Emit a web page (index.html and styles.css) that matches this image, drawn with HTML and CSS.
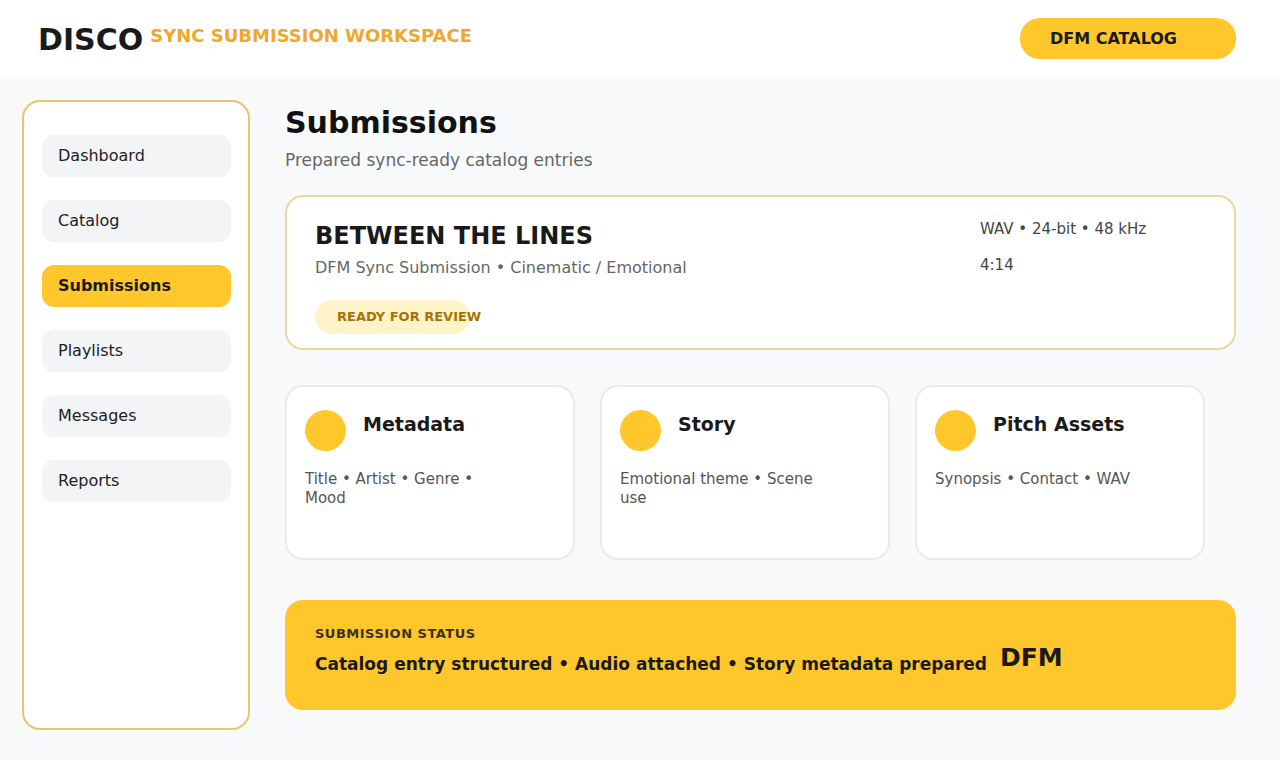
FILE: index.html
```html
<!DOCTYPE html>
<html lang="en">
<head>
<meta charset="utf-8">
<title>DISCO – Sync Submission Workspace</title>
<link rel="stylesheet" href="styles.css">
</head>
<body>
<header class="topbar">
  <div class="brand">
    <span class="brand-logo">DISCO</span>
    <span class="brand-sub">SYNC SUBMISSION WORKSPACE</span>
  </div>
  <button class="catalog-btn">DFM CATALOG</button>
</header>
<div class="layout">
  <aside class="sidebar">
    <nav class="nav">
      <a class="nav-item">Dashboard</a>
      <a class="nav-item">Catalog</a>
      <a class="nav-item active">Submissions</a>
      <a class="nav-item">Playlists</a>
      <a class="nav-item">Messages</a>
      <a class="nav-item">Reports</a>
    </nav>
  </aside>
  <main class="main">
    <h1 class="page-title">Submissions</h1>
    <p class="page-sub">Prepared sync-ready catalog entries</p>

    <section class="hero">
      <div class="hero-left">
        <h2 class="hero-title">BETWEEN THE LINES</h2>
        <p class="hero-meta">DFM Sync Submission • Cinematic / Emotional</p>
        <span class="badge">READY FOR REVIEW</span>
      </div>
      <div class="hero-right">
        <p class="spec">WAV • 24-bit • 48 kHz</p>
        <p class="spec spec-time">4:14</p>
      </div>
    </section>

    <section class="cards">
      <div class="card">
        <div class="card-head">
          <span class="dot"></span>
          <h3 class="card-title">Metadata</h3>
        </div>
        <p class="card-desc">Title • Artist • Genre • Mood</p>
      </div>
      <div class="card">
        <div class="card-head">
          <span class="dot"></span>
          <h3 class="card-title">Story</h3>
        </div>
        <p class="card-desc">Emotional theme • Scene use</p>
      </div>
      <div class="card">
        <div class="card-head">
          <span class="dot"></span>
          <h3 class="card-title">Pitch Assets</h3>
        </div>
        <p class="card-desc">Synopsis • Contact • WAV</p>
      </div>
    </section>

    <section class="status">
      <div class="status-label">SUBMISSION STATUS</div>
      <div class="status-line">
        <span class="status-text">Catalog entry structured • Audio attached • Story metadata prepared</span>
        <span class="status-dfm">DFM</span>
      </div>
    </section>
  </main>
</div>
</body>
</html>
```

FILE: styles.css
```css
* { box-sizing: border-box; }

html, body {
  margin: 0;
  padding: 0;
}

body {
  font-family: "DejaVu Sans", Verdana, sans-serif;
  background: #f8f9fb;
  color: #1a1a1a;
  width: 1280px;
  height: 760px;
  overflow: hidden;
}

p, h1, h2, h3 { margin: 0; }

/* Header */
.topbar {
  height: 77px;
  background: #ffffff;
  display: flex;
  align-items: flex-start;
  justify-content: space-between;
  padding: 0 44px 0 38px;
}

.brand {
  display: flex;
  align-items: flex-start;
  gap: 7px;
  margin-top: 22px;
}

.brand-logo {
  font-size: 30px;
  line-height: 36px;
  font-weight: 700;
  color: #1a1a1a;
}

.brand-sub {
  font-size: 18px;
  line-height: 22px;
  font-weight: 700;
  color: #f0a72e;
  margin-top: 3px;
}

.catalog-btn {
  margin-top: 18px;
  width: 216px;
  height: 41px;
  border: none;
  border-radius: 20px;
  background: #ffc72c;
  font-family: inherit;
  font-size: 16px;
  font-weight: 700;
  color: #1a1a1a;
  text-align: left;
  padding: 0 0 0 30px;
}

/* Layout */
.layout {
  display: flex;
  gap: 35px;
  padding: 23px 44px 0 22px;
}

.sidebar {
  width: 228px;
  height: 630px;
  flex: none;
  background: #ffffff;
  border: 2px solid #e6c868;
  border-radius: 18px;
  padding: 33px 17px 0 18px;
}

.nav {
  display: flex;
  flex-direction: column;
  gap: 23px;
}

.nav-item {
  display: block;
  height: 42px;
  line-height: 42px;
  padding-left: 16px;
  border-radius: 12px;
  background: #f3f4f6;
  font-size: 16px;
  color: #222;
}

.nav-item.active {
  background: #ffc72c;
  font-weight: 700;
  color: #1a1a1a;
}

/* Main */
.main {
  flex: 1;
  padding-top: 5px;
}

.page-title {
  font-size: 30px;
  line-height: 35px;
  font-weight: 700;
  color: #111;
}

.page-sub {
  margin-top: 10px;
  font-size: 17px;
  line-height: 20px;
  color: #666;
}

.hero {
  margin-top: 25px;
  height: 155px;
  background: #ffffff;
  border: 2px solid #e8d8a2;
  border-radius: 18px;
  padding: 25px 30px 0 28px;
  display: flex;
  justify-content: space-between;
}

.hero-title {
  font-size: 24px;
  line-height: 28px;
  font-weight: 700;
  color: #1a1a1a;
}

.hero-meta {
  margin-top: 8px;
  font-size: 16px;
  line-height: 20px;
  color: #666;
}

.badge {
  display: block;
  margin-top: 22px;
  width: 155px;
  height: 34px;
  line-height: 34px;
  padding-left: 22px;
  border-radius: 17px;
  background: #fff3c9;
  color: #a87208;
  font-size: 13px;
  font-weight: 700;
  white-space: nowrap;
}

.hero-right {
  width: 224px;
}

.spec {
  font-size: 15px;
  line-height: 18px;
  color: #444;
  margin-top: -2px;
}

.spec-time {
  margin-top: 18px;
}

/* Cards */
.cards {
  margin-top: 35px;
  display: flex;
  gap: 25px;
}

.card {
  width: 290px;
  height: 175px;
  background: #ffffff;
  border: 2px solid #e8eaee;
  border-radius: 18px;
  padding: 23px 18px 0 18px;
}

.card-head {
  display: flex;
  align-items: flex-start;
  gap: 17px;
}

.dot {
  width: 41px;
  height: 41px;
  border-radius: 50%;
  background: #ffc72c;
  flex: none;
}

.card-title {
  margin-top: 3px;
  font-size: 19px;
  line-height: 22px;
  font-weight: 700;
  color: #1a1a1a;
}

.card-desc {
  margin-top: 19px;
  max-width: 200px;
  font-size: 15px;
  line-height: 19px;
  color: #555;
}

/* Status */
.status {
  margin-top: 40px;
  height: 110px;
  background: #ffc72c;
  border-radius: 18px;
  padding: 26px 30px 0 30px;
}

.status-label {
  font-size: 13px;
  line-height: 16px;
  font-weight: 700;
  letter-spacing: 0.5px;
  color: #3a3020;
}

.status-line {
  margin-top: 10px;
  display: flex;
  align-items: flex-start;
  gap: 13px;
}

.status-text {
  font-size: 17px;
  line-height: 24px;
  font-weight: 700;
  color: #1a1a1a;
}

.status-dfm {
  margin-top: -9px;
  font-size: 25px;
  line-height: 30px;
  font-weight: 700;
  color: #1a1a1a;
}
```
